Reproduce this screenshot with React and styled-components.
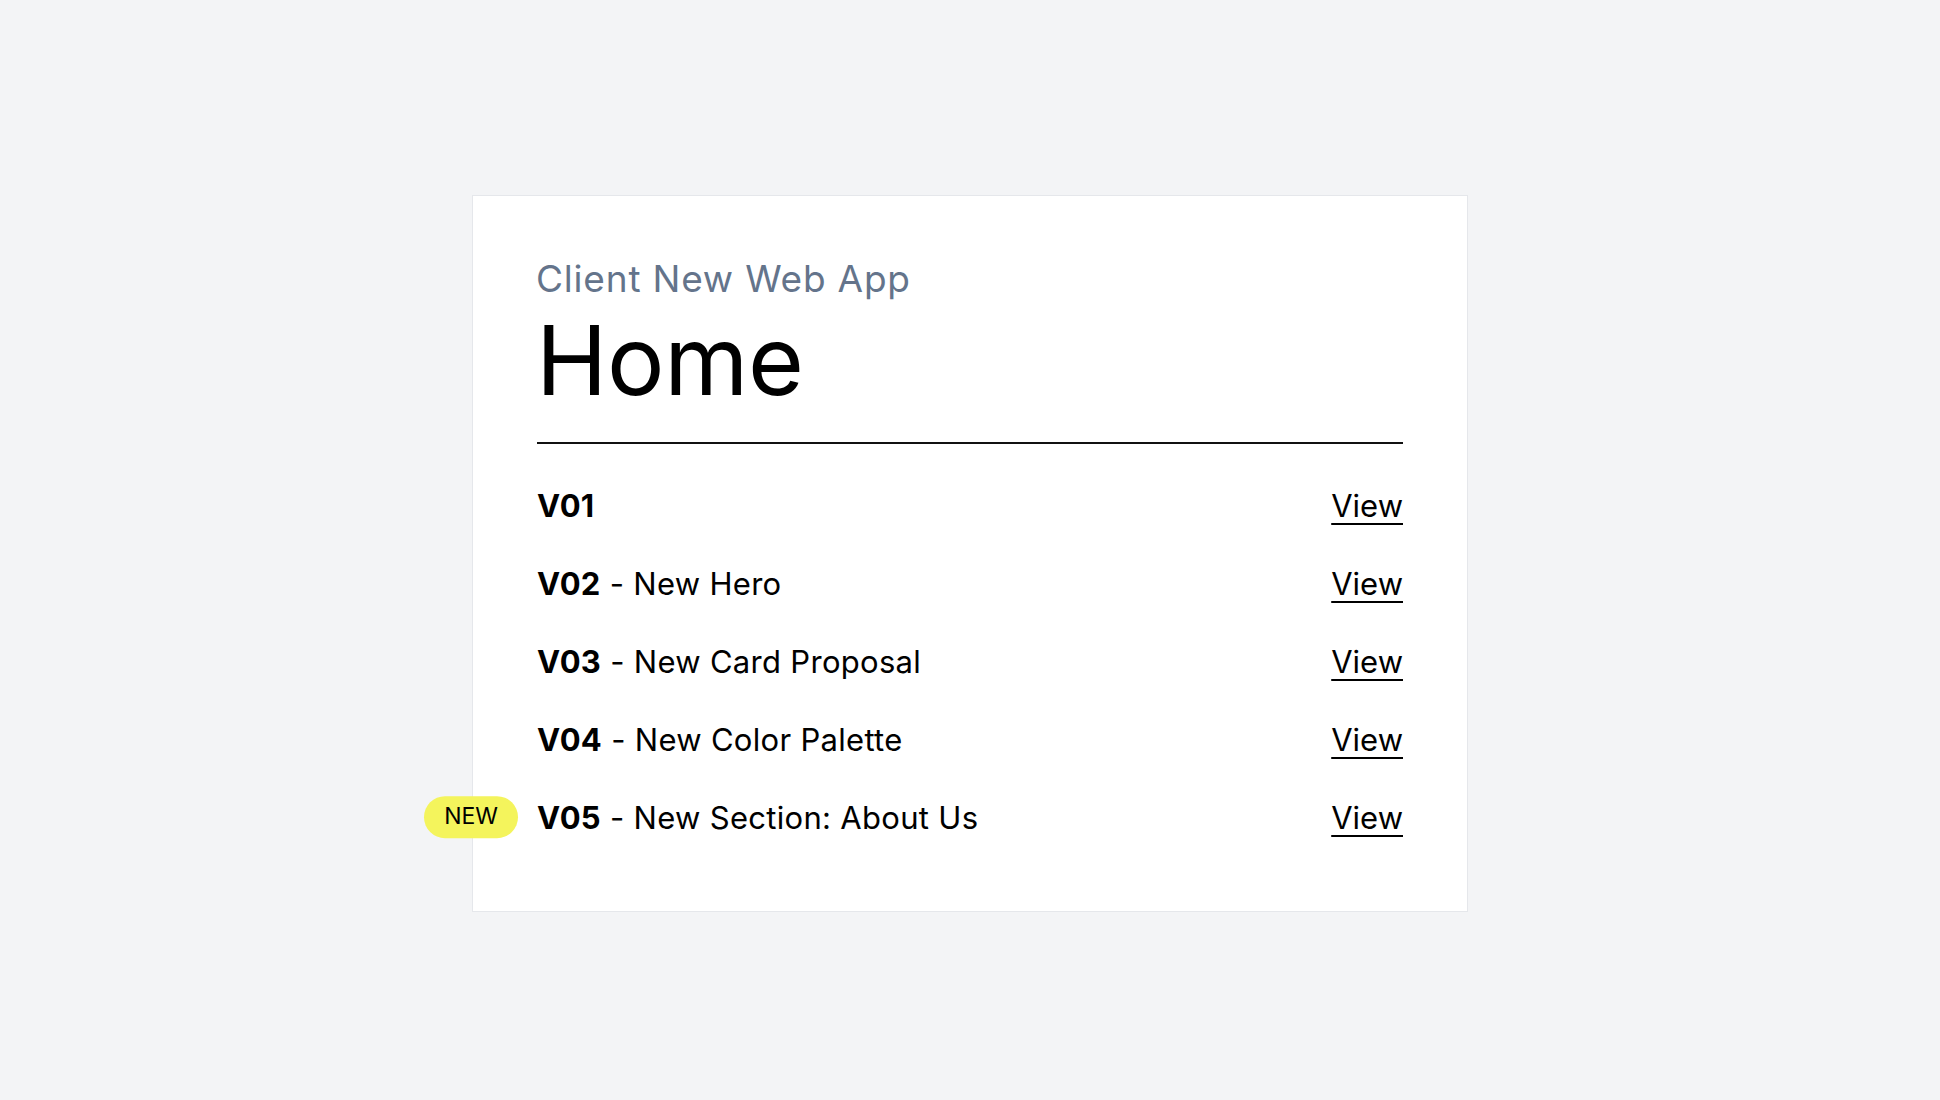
import React from 'react'
import styled, { createGlobalStyle } from 'styled-components'

const versions = [
  { code: 'V01' },
  { code: 'V02', title: 'New Hero' },
  { code: 'V03', title: 'New Card Proposal' },
  { code: 'V04', title: 'New Color Palette' },
  { code: 'V05', title: 'New Section: About Us', isNew: true },
]

function App() {
  return (
    <>
      <GlobalStyle />
      <Page>
        <Card>
          <Header>
            <Subtitle>Client New Web App</Subtitle>
            <Title>Home</Title>
          </Header>
          <List>
            {versions.map(v => (
              <Row key={v.code}>
                {v.isNew && <Badge>NEW</Badge>}
                <Label>
                  <strong>{v.code}</strong>
                  {v.title && ` - ${v.title}`}
                </Label>
                <ViewLink href="#">View</ViewLink>
              </Row>
            ))}
          </List>
        </Card>
      </Page>
    </>
  )
}

export default App

const GlobalStyle = createGlobalStyle`
  html, body {
    margin: 0;
    padding: 0;
    background: #f3f4f6;
    font-family: Inter, "Noto Sans", sans-serif;
  }
`

const Page = styled.div`
  min-height: 100vh;
  display: flex;
  align-items: center;
  justify-content: center;
`

const Card = styled.div`
  width: 996px;
  box-sizing: border-box;
  background: #fff;
  border: 1px solid #e5e7eb;
  padding: 65px 64px 54px;
  margin-top: 6px;
`

const Header = styled.div`
  display: flex;
  flex-direction: column;
  padding-bottom: 34px;
  border-bottom: 2px solid #111;
`

const Subtitle = styled.div`
  font-size: 37px;
  line-height: 36px;
  letter-spacing: 0.8px;
  color: #64748b;
  margin-left: -1px;
`

const Title = styled.h1`
  margin: 15px 0 0 -1px;
  font-size: 96px;
  line-height: 96px;
  font-weight: 400;
  color: #000;
  letter-spacing: -0.3px;
`

const List = styled.div`
  display: flex;
  flex-direction: column;
  padding-top: 23px;
`

const Row = styled.div`
  position: relative;
  display: flex;
  align-items: center;
  justify-content: space-between;
  padding: 16px 0;
  font-size: 31px;
  line-height: 46px;
  letter-spacing: 0.3px;
  color: #000;
`

const Label = styled.div`
  strong {
    font-weight: 650;
  }
`

const ViewLink = styled.a`
  color: #000;
  letter-spacing: 0;
  text-decoration: underline;
  text-decoration-thickness: 2px;
  text-underline-offset: 6px;
`

const Badge = styled.span`
  position: absolute;
  right: calc(100% + 19px);
  top: 50%;
  transform: translateY(-52%);
  height: 42px;
  padding: 0 20px;
  display: flex;
  align-items: center;
  border-radius: 21px;
  background: #f4f45c;
  font-size: 23px;
  line-height: 1;
  letter-spacing: 0;
  color: #000;
`
